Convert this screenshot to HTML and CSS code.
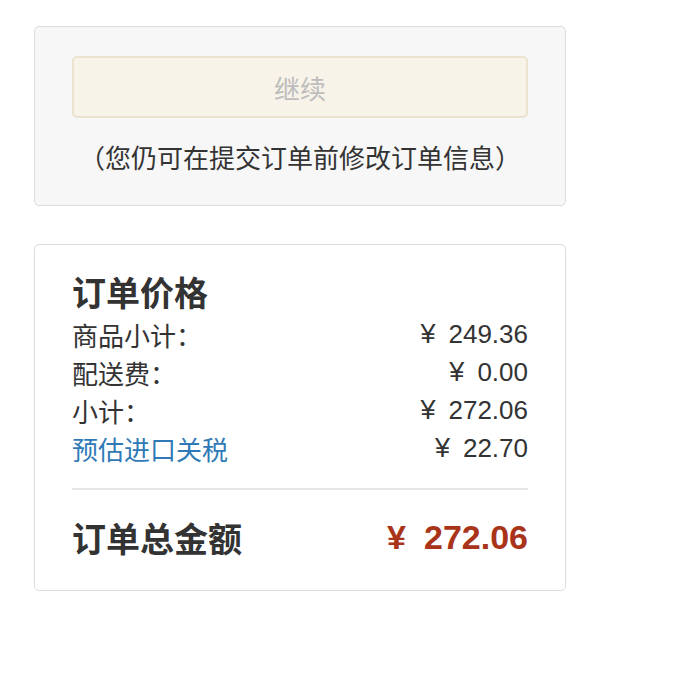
FILE: index.html
```html
<!DOCTYPE html>
<html lang="zh-CN">
<head>
<meta charset="utf-8">
<title>订单价格</title>
<link rel="stylesheet" href="styles.css">
</head>
<body>
<div class="page">
  <div class="box box-continue">
    <button class="btn-continue" type="button" disabled>继续</button>
    <p class="note">（您仍可在提交订单前修改订单信息）</p>
  </div>
  <div class="box box-summary">
    <h2 class="title">订单价格</h2>
    <div class="rows">
      <div class="row"><span class="label">商品小计：</span><span class="amount"><span class="yen">¥</span>249.36</span></div>
      <div class="row"><span class="label">配送费：</span><span class="amount"><span class="yen">¥</span>0.00</span></div>
      <div class="row"><span class="label">小计：</span><span class="amount"><span class="yen">¥</span>272.06</span></div>
      <div class="row"><a class="label link" href="#">预估进口关税</a><span class="amount"><span class="yen">¥</span>22.70</span></div>
    </div>
    <hr class="divider">
    <div class="row total"><span class="label">订单总金额</span><span class="amount"><span class="yen">¥</span>272.06</span></div>
  </div>
</div>
</body>
</html>
```

FILE: styles.css
```css
html, body {
  margin: 0;
  padding: 0;
  background: #ffffff;
}
body {
  font-family: "Liberation Sans", "Noto Sans CJK SC", sans-serif;
  color: #333333;
}
.page {
  padding: 26px 0 0 34px;
  display: flex;
  flex-direction: column;
  gap: 38px;
  width: 532px;
}
.box {
  border: 1px solid #dcdcdc;
  border-radius: 5px;
  box-sizing: border-box;
  width: 532px;
  padding: 0 37px;
}
.box-continue {
  background: #f7f7f7;
  padding-top: 29px;
  padding-bottom: 29px;
  display: flex;
  flex-direction: column;
  align-items: stretch;
}
.btn-continue {
  height: 62px;
  border: 2px solid #ebe3cf;
  border-radius: 5px;
  background: #f8f3e8;
  color: #bdbdbd;
  font-family: "Noto Sans CJK SC", sans-serif;
  font-size: 26px;
  padding: 0;
  margin: 0;
}
.note {
  margin: 20px 0 0;
  text-align: center;
  font-family: "Noto Sans CJK SC", sans-serif;
  font-size: 26px;
  line-height: 38px;
  color: #333;
  letter-spacing: 0;
}
.box-summary {
  background: #ffffff;
  padding-top: 27px;
  padding-bottom: 29px;
}
.title {
  margin: 0;
  font-family: "Noto Sans CJK SC", sans-serif;
  font-weight: 700;
  font-size: 34px;
  line-height: 40px;
  color: #333;
}
.rows {
  margin-top: 3px;
}
.row {
  display: flex;
  justify-content: space-between;
  align-items: center;
  height: 38px;
  font-size: 26px;
}
.label {
  font-family: "Noto Sans CJK SC", sans-serif;
  color: #333;
}
.link {
  color: #2f7ab6;
  text-decoration: none;
}
.amount {
  font-family: "Liberation Sans", sans-serif;
  color: #333;
}
.yen {
  display: inline-block;
  font-size: 27px;
  margin-right: 13px;
}
.divider {
  border: 0;
  height: 2px;
  background: #e6e6e6;
  margin: 21px 0 23px;
}
.row.total {
  height: 48px;
  font-size: 34px;
  font-weight: 700;
}
.row.total .label {
  color: #333;
}
.row.total .amount {
  color: #a9341a;
}
.row.total .yen {
  font-size: 34px;
  margin-right: 18px;
}
```
